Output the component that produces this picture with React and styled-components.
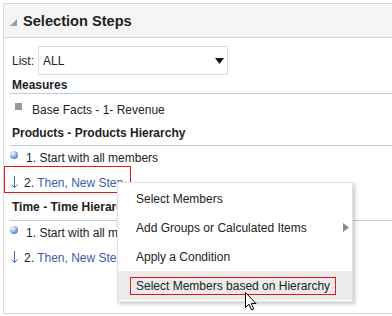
import styled, { createGlobalStyle } from "styled-components";

const GlobalStyle = createGlobalStyle`
  body {
    margin: 0;
    background: #fff;
    overflow: hidden;
    font-family: "Liberation Sans", Arial, sans-serif;
    color: #222;
  }
`;

const Panel = styled.section`
  position: relative;
  box-sizing: border-box;
  width: 389px;
  height: 311px;
  margin: 3px 0 0 3px;
  border: 1px solid #d9d9d9;
  border-right: none;
  background: #fff;
  overflow: hidden;
`;

const Header = styled.header`
  display: flex;
  align-items: center;
  gap: 6px;
  height: 33px;
  padding-left: 6px;
  background: #f5f5f5;
  border-bottom: 1px solid #d4d4d4;
`;

const Collapse = styled.svg`
  margin-top: 3px;
  flex: none;
`;

const Title = styled.h1`
  margin: 0;
  padding-top: 1px;
  font-size: 14.6px;
  font-weight: bold;
  line-height: 1;
  color: #1e1e1e;
`;

const Body = styled.div`
  padding: 8px 0 0 6px;
`;

const ListRow = styled.div`
  display: flex;
  align-items: center;
  gap: 4px;
  padding-left: 2px;
  font-size: 12px;
`;

const SelectBox = styled.div`
  box-sizing: border-box;
  display: flex;
  align-items: center;
  justify-content: space-between;
  width: 190px;
  height: 29px;
  padding: 0 3px 0 4px;
  border: 1px solid #d5dfdf;
  font-size: 12px;
`;

const SectionTitle = styled.h2`
  margin: ${(p) => p.$top}px 0 0;
  padding: 0 0 ${(p) => p.$gap}px 2px;
  font-size: 12px;
  font-weight: bold;
  line-height: 15px;
  border-bottom: 1px solid #b9cde0;
  white-space: nowrap;
`;

const MeasureItem = styled.div`
  display: flex;
  align-items: flex-start;
  padding: 6px 0 0 5px;
  font-size: 12px;
  line-height: 20px;
`;

const Square = styled.span`
  flex: none;
  width: 7px;
  height: 7px;
  margin: 3px 10px 0 0;
  background: #9a9a9a;
`;

const StepRow = styled.div`
  position: relative;
  display: flex;
  align-items: flex-start;
  height: 25px;
  font-size: 12px;
  line-height: 25px;
  white-space: nowrap;
  ${(p) =>
    p.$marked &&
    `
    &::before {
      content: "";
      position: absolute;
      left: -6px;
      top: -5px;
      width: 127px;
      height: 27px;
      box-sizing: border-box;
      border: 1px solid #e8161c;
    }
  `}
`;

const Bullet = styled.span`
  flex: none;
  width: 8px;
  height: 8px;
  margin: 5px 8px 0 0;
  border-radius: 50%;
  background: radial-gradient(
    circle at 35% 30%,
    #ffffff 0,
    #c6d6f0 25%,
    #5b87d2 70%,
    #3563b0 100%
  );
`;

const DownArrow = styled.svg`
  flex: none;
  margin: 5px 6px 0 1px;
`;

const StepLink = styled.span`
  color: #3a60a6;
`;

const Menu = styled.ul`
  position: absolute;
  left: 113px;
  top: 178px;
  box-sizing: border-box;
  width: 236px;
  margin: 0;
  padding: 1px 0 1px;
  list-style: none;
  background: #fff;
  border: 1px solid #e2e2e2;
  box-shadow: 2px 2px 4px rgba(0, 0, 0, 0.22);
`;

const MenuItem = styled.li`
  display: flex;
  align-items: center;
  height: 29px;
  padding: 0 3px 0 18px;
  font-size: 12px;
  line-height: 16px;
  color: #222;
  background: ${(p) => (p.$active ? "#ebebeb" : "transparent")};
`;

const Marked = styled.span`
  margin-left: -6px;
  padding: 0 5px;
  border: 1px solid #e8161c;
`;

const SubArrow = styled.svg`
  margin-left: auto;
`;

const Cursor = styled.svg`
  position: absolute;
  left: 241px;
  top: 288px;
`;

const Step = ({ kind, num, text, marked }) => (
  <StepRow $marked={marked}>
    {kind === "start" ? (
      <Bullet />
    ) : (
      <DownArrow width="7" height="12" viewBox="0 0 7 12">
        <path
          d="M3.5 0 V11.5 M0.5 8.5 L3.5 11.5 L6.5 8.5"
          fill="none"
          stroke="#3a6ac0"
          strokeWidth="1"
        />
      </DownArrow>
    )}
    <span>
      {num}.{" "}
      {kind === "start" ? text : <StepLink>{text}</StepLink>}
    </span>
  </StepRow>
);

export default function App() {
  return (
    <>
      <GlobalStyle />
      <Panel>
        <Header>
          <Collapse width="7" height="7" viewBox="0 0 7 7">
            <polygon points="7,0 7,7 0,7" fill="#9c9c9c" />
          </Collapse>
          <Title>Selection Steps</Title>
        </Header>
        <Body>
          <ListRow>
            <span>List:</span>
            <SelectBox>
              <span>ALL</span>
              <svg width="9" height="6" viewBox="0 0 9 6">
                <polygon points="0,0 9,0 4.5,6" fill="#111" />
              </svg>
            </SelectBox>
          </ListRow>

          <SectionTitle $top={3} $gap={0}>
            Measures
          </SectionTitle>
          <MeasureItem>
            <Square />
            <span>Base Facts - 1- Revenue</span>
          </MeasureItem>

          <SectionTitle $top={6} $gap={4}>
            Products - Products Hierarchy
          </SectionTitle>
          <Step kind="start" num={1} text="Start with all members" />
          <Step kind="then" num={2} text="Then, New Step" marked />

          <SectionTitle $top={4} $gap={5}>
            Time - Time Hierarchy
          </SectionTitle>
          <Step kind="start" num={1} text="Start with all members" />
          <Step kind="then" num={2} text="Then, New Step" />
        </Body>

        <Menu>
          <MenuItem>Select Members</MenuItem>
          <MenuItem>
            Add Groups or Calculated Items
            <SubArrow width="6" height="9" viewBox="0 0 6 9">
              <polygon points="0,0 6,4.5 0,9" fill="#8a8a8a" />
            </SubArrow>
          </MenuItem>
          <MenuItem>Apply a Condition</MenuItem>
          <MenuItem $active>
            <Marked>Select Members based on Hierarchy</Marked>
          </MenuItem>
        </Menu>

        <Cursor width="13" height="20" viewBox="0 0 13 20">
          <path
            d="M0.5 0.5 L0.5 15.5 L4 12.2 L6.5 18 L8.7 17 L6.3 11.5 L11 11.5 Z"
            fill="#fff"
            stroke="#000"
            strokeWidth="1"
            strokeLinejoin="miter"
          />
        </Cursor>
      </Panel>
    </>
  );
}
